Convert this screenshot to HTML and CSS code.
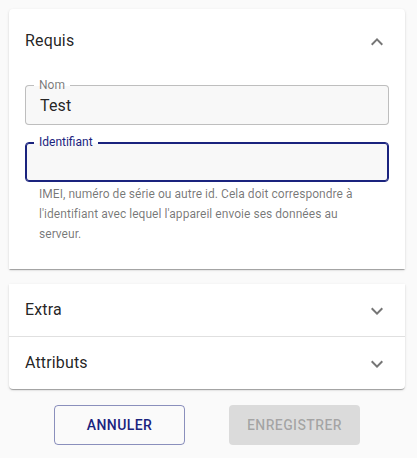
FILE: index.html
```html
<!DOCTYPE html>
<html lang="fr">
<head>
<meta charset="utf-8">
<link rel="stylesheet" href="styles.css">
</head>
<body>
<div class="page">
  <section class="card card-first">
    <div class="summary summary-expanded">
      <span class="summary-title">Requis</span>
      <svg class="chevron" viewBox="0 0 24 24" width="24" height="24"><path d="M12 8l-6 6 1.41 1.41L12 10.83l4.59 4.58L18 14z"/></svg>
    </div>
    <div class="details">
      <div class="field">
        <span class="field-label">Nom</span>
        <span class="field-value">Test</span>
      </div>
      <div class="field field-focused">
        <span class="field-label">Identifiant</span>
        <span class="field-value"></span>
      </div>
      <p class="helper">IMEI, numéro de série ou autre id. Cela doit correspondre à l'identifiant avec lequel l'appareil envoie ses données au serveur.</p>
    </div>
  </section>
  <section class="card card-second">
    <div class="summary">
      <span class="summary-title">Extra</span>
      <svg class="chevron" viewBox="0 0 24 24" width="24" height="24"><path d="M16.59 8.59L12 13.17 7.41 8.59 6 10l6 6 6-6z"/></svg>
    </div>
    <div class="summary summary-divided">
      <span class="summary-title">Attributs</span>
      <svg class="chevron" viewBox="0 0 24 24" width="24" height="24"><path d="M16.59 8.59L12 13.17 7.41 8.59 6 10l6 6 6-6z"/></svg>
    </div>
  </section>
  <div class="actions">
    <button class="btn btn-outlined">Annuler</button>
    <button class="btn btn-disabled" disabled>Enregistrer</button>
  </div>
</div>
</body>
</html>
```
FILE: styles.css
```css
* { box-sizing: border-box; }
html, body {
  margin: 0;
  padding: 0;
  background: #fafafa;
  font-family: Roboto, "Liberation Sans", sans-serif;
  color: rgba(0, 0, 0, 0.87);
}
.page {
  width: 396px;
  margin-left: 9px;
  padding-top: 9px;
}
.card {
  background: #fff;
  box-shadow: 0px 2px 1px -1px rgba(0,0,0,0.2), 0px 1px 1px 0px rgba(0,0,0,0.14), 0px 1px 3px 0px rgba(0,0,0,0.12);
}
.card-first {
  border-radius: 4px 4px 0 0;
}
.card-second {
  margin-top: 15px;
  border-radius: 0 0 4px 4px;
}
.summary {
  height: 52px;
  padding: 0 16px;
  display: flex;
  align-items: center;
  justify-content: space-between;
}
.summary-expanded {
  height: 64px;
}
.summary-divided {
  height: 53px;
  border-top: 1px solid rgba(0, 0, 0, 0.12);
}
.summary-title {
  font-size: 16px;
  line-height: 24px;
  letter-spacing: 0.00938em;
}
.chevron {
  fill: rgba(0, 0, 0, 0.54);
  flex: none;
  margin-top: 1px;
}
.summary-expanded .chevron {
  margin-top: 2px;
}
.details {
  padding: 12px 16px 25px;
}
.field {
  position: relative;
  height: 40px;
  border: 1px solid rgba(0, 0, 0, 0.23);
  border-radius: 4px;
  background: #f8f8f8;
  padding: 0 14px;
  display: flex;
  align-items: center;
}
.field + .field {
  margin-top: 17px;
}
.field-focused {
  border-color: #1a237e;
  box-shadow: inset 0 0 0 1px #1a237e;
}
.field-label {
  position: absolute;
  top: -7px;
  left: 8px;
  padding: 0 5px;
  font-size: 12px;
  line-height: 12px;
  color: rgba(0, 0, 0, 0.54);
  background: linear-gradient(#fff 0 7px, #f8f8f8 7px);
}
.field-focused .field-label {
  color: #1a237e;
}
.field-value {
  font-size: 16px;
  line-height: 19px;
  letter-spacing: 0.00938em;
}
.helper {
  margin: 2px 14px 0;
  font-size: 12px;
  line-height: 20px;
  color: rgba(0, 0, 0, 0.54);
  letter-spacing: 0.00333em;
}
.actions {
  margin-top: 16px;
  display: flex;
  justify-content: center;
  gap: 44px;
}
.btn {
  width: 131px;
  height: 40px;
  border-radius: 4px;
  font-family: Roboto, "Liberation Sans", sans-serif;
  font-size: 14px;
  font-weight: 500;
  text-transform: uppercase;
  letter-spacing: 0.02857em;
  padding: 0;
}
.btn-outlined {
  background: transparent;
  border: 1px solid rgba(26, 35, 126, 0.5);
  color: #1a237e;
}
.btn-disabled {
  background: rgba(0, 0, 0, 0.12);
  border: none;
  color: rgba(0, 0, 0, 0.26);
}
```
